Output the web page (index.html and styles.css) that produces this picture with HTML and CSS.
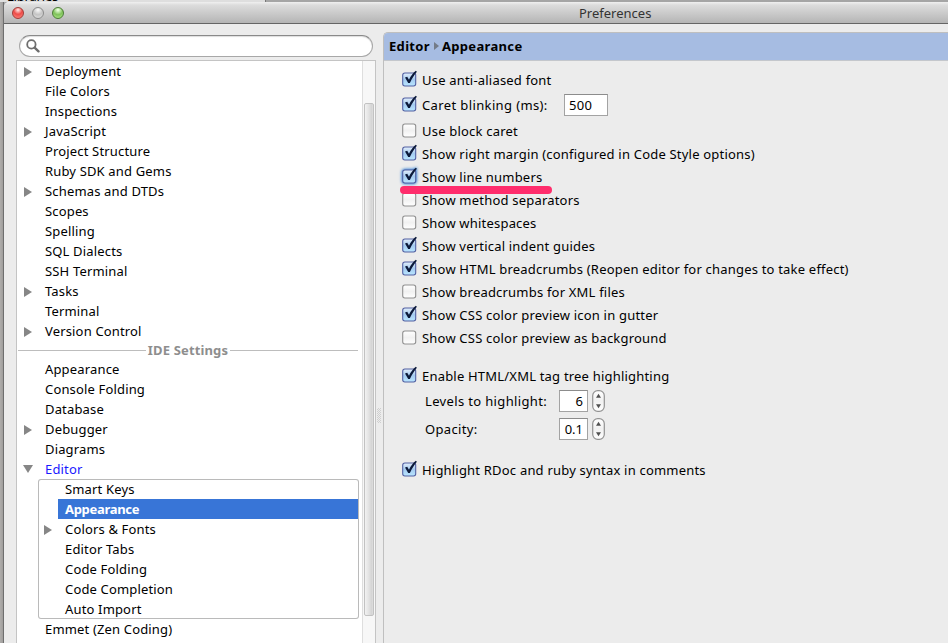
FILE: index.html
```html
<!DOCTYPE html>
<html lang="en">
<head>
<meta charset="utf-8">
<title>Preferences</title>
<link rel="stylesheet" href="styles.css">
</head>
<body>
<svg class="defs" width="0" height="0">
  <defs>
    <linearGradient id="blue" x1="0" y1="0" x2="0" y2="1"><stop offset="0" stop-color="#e4effb"/><stop offset=".5" stop-color="#a5cbf0"/><stop offset="1" stop-color="#b9e6ff"/></linearGradient>
    <linearGradient id="plain" x1="0" y1="0" x2="0" y2="1"><stop offset="0" stop-color="#fff"/><stop offset=".5" stop-color="#f1f1f1"/><stop offset="1" stop-color="#fff"/></linearGradient>
    <symbol id="on" viewBox="0 0 16 17">
      <rect x=".7" y="3" width="13" height="13" rx="2.2" fill="url(#blue)" stroke="#5260a2" stroke-width="1.1"/>
      <path d="M3 7.500 5.200 6.800l1.800 2.900C8.700 6.200 11 3 13.800.8l1.100.9C12.200 5 9.900 8.500 7.900 13L6.200 13Z" fill="#0c1a3a"/>
    </symbol>
    <symbol id="off" viewBox="0 0 16 17">
      <rect x=".7" y="3" width="13" height="13" rx="2.2" fill="url(#plain)" stroke="#909090" stroke-width="1.1"/>
    </symbol>
    <symbol id="step" viewBox="0 0 13 22">
      <rect x=".7" y=".7" width="11.600" height="20.600" rx="5" fill="url(#plain)" stroke="#929292" stroke-width="1.2"/>
      <path d="M4 7.800h5L6.500 3.800ZM4 14.200h5L6.500 18.200Z" fill="#505050"/>
    </symbol>
  </defs>
</svg>
<div class="desktop"><span class="behind">Libraries</span></div>
<div class="window">
  <header class="titlebar">
    <i class="light red"></i><i class="light gray"></i><i class="light green"></i>
    <span class="title">Preferences</span>
  </header>
  <div class="content">
    <aside class="sidebar">
      <div class="search"><svg width="14" height="14" viewBox="0 0 14 14"><circle cx="5.400" cy="5.400" r="4.200" fill="none" stroke="#6e6e6e" stroke-width="1.800"/><path d="m8.600 8.600 3.900 3.700" stroke="#6e6e6e" stroke-width="2.400" stroke-linecap="round"/></svg></div>
      <div class="tree">
        <div class="rows">
          <div class="row closed">Deployment</div>
          <div class="row">File Colors</div>
          <div class="row">Inspections</div>
          <div class="row closed">JavaScript</div>
          <div class="row">Project Structure</div>
          <div class="row">Ruby SDK and Gems</div>
          <div class="row closed">Schemas and DTDs</div>
          <div class="row">Scopes</div>
          <div class="row">Spelling</div>
          <div class="row">SQL Dialects</div>
          <div class="row">SSH Terminal</div>
          <div class="row closed">Tasks</div>
          <div class="row">Terminal</div>
          <div class="row closed">Version Control</div>
          <div class="divider">IDE Settings</div>
          <div class="row">Appearance</div>
          <div class="row">Console Folding</div>
          <div class="row">Database</div>
          <div class="row closed">Debugger</div>
          <div class="row">Diagrams</div>
          <div class="row open">Editor</div>
          <div class="group">
            <div class="row">Smart Keys</div>
            <div class="row selected">Appearance</div>
            <div class="row closed">Colors &amp; Fonts</div>
            <div class="row">Editor Tabs</div>
            <div class="row">Code Folding</div>
            <div class="row">Code Completion</div>
            <div class="row">Auto Import</div>
          </div>
          <div class="row">Emmet (Zen Coding)</div>
        </div>
        <div class="track"><div class="thumb"></div></div>
      </div>
    </aside>
    <div class="splitter"><i class="grip"></i></div>
    <main class="panel">
      <div class="crumbs">Editor<i class="arrow"></i>Appearance</div>
      <div class="options">
        <div class="opt"><svg class="box"><use href="#on"/></svg>Use anti-aliased font</div>
        <div class="opt tall"><svg class="box"><use href="#on"/></svg><span class="caret-label">Caret blinking (ms):</span><span class="field">500</span></div>
        <div class="opt"><svg class="box"><use href="#off"/></svg>Use block caret</div>
        <div class="opt"><svg class="box"><use href="#on"/></svg>Show right margin (configured in Code Style options)</div>
        <div class="opt marked"><svg class="box focus"><use href="#on"/></svg>Show line numbers</div>
        <div class="opt"><svg class="box"><use href="#off"/></svg>Show method separators</div>
        <div class="opt"><svg class="box"><use href="#off"/></svg>Show whitespaces</div>
        <div class="opt"><svg class="box"><use href="#on"/></svg>Show vertical indent guides</div>
        <div class="opt"><svg class="box"><use href="#on"/></svg>Show HTML breadcrumbs (Reopen editor for changes to take effect)</div>
        <div class="opt"><svg class="box"><use href="#off"/></svg>Show breadcrumbs for XML files</div>
        <div class="opt"><svg class="box"><use href="#on"/></svg>Show CSS color preview icon in gutter</div>
        <div class="opt"><svg class="box"><use href="#off"/></svg>Show CSS color preview as background</div>
        <div class="opt spaced"><svg class="box"><use href="#on"/></svg>Enable HTML/XML tag tree highlighting</div>
        <div class="spin"><span class="spin-label">Levels to highlight:</span><span class="field small">6</span><svg class="stepper"><use href="#step"/></svg></div>
        <div class="spin"><span class="spin-label">Opacity:</span><span class="field small">0.1</span><svg class="stepper"><use href="#step"/></svg></div>
        <div class="opt last"><svg class="box"><use href="#on"/></svg>Highlight RDoc and ruby syntax in comments</div>
      </div>
    </main>
  </div>
</div>
</body>
</html>
```
FILE: styles.css
```css
* { box-sizing: border-box; }
body {
  margin: 0;
  width: 948px;
  height: 643px;
  overflow: hidden;
  background: linear-gradient(90deg, #b0aeac, #a09e9c 3px, #6f6f6f 3px, #6f6f6f 4px, #aaa 4px);
  font: 13px/20px "Noto Sans", "Open Sans", sans-serif;
  color: #000;
}
.defs { position: absolute; }
.desktop {
  height: 2px;
  overflow: hidden;
  background: linear-gradient(90deg, #dedede 265px, #777 265px, #777 266px, #a5a5a5 266px);
}
.behind { display: block; margin: -12px 0 0 7px; line-height: 16px; letter-spacing: -.2px; }
.window {
  height: 641px;
  margin-left: 4px;
  background: #ececec;
  border-top-left-radius: 5px;
  overflow: hidden;
}
.titlebar {
  display: flex;
  align-items: center;
  gap: 8px;
  height: 22px;
  padding-left: 8px;
  background: linear-gradient(#f0f0f0, #dcdcdc 3px, #b5b5b5);
  border-bottom: 1px solid #656565;
}
.light {
  width: 12px;
  height: 12px;
  border-radius: 50%;
  border: 1px solid #8b8b8b;
}
.red { border-color: #a13a36; background: radial-gradient(circle at 50% 20%, #ffd9d6 5%, #ee4c48 45%, #f76e68 75%, #ff9b94); }
.gray { background: radial-gradient(circle at 50% 20%, #f5f5f5 5%, #c4c4c4 50%, #e4e4e4); }
.green { border-color: #4a7c35; background: radial-gradient(circle at 50% 20%, #eaffdc 5%, #7fc25a 50%, #b4ee8e); }
.title { margin-left: 507px; color: #333; letter-spacing: 0; }
.content { display: flex; height: 619px; }
.sidebar { width: 372px; padding: 11px 0 0 12px; }
.search {
  width: 354px;
  height: 22px;
  margin: 0 0 3px 3px;
  padding: 2px 0 0 6px;
  border: 1px solid #a8a8a8;
  border-top-color: #8a8a8a;
  border-radius: 11px;
  background: #fff;
  box-shadow: inset 0 1px 1px #ddd;
}
.search svg { display: block; margin-top: 1px; }
.tree {
  display: flex;
  height: 590px;
  border: 1px solid #c4c4c4;
  border-bottom: 0;
  background: #fff;
}
.rows { width: 345px; flex: none; }
.row {
  position: relative;
  height: 20px;
  padding-left: 28px;
  white-space: nowrap;
  letter-spacing: .16px;
}
.closed::before, .open::before {
  content: "";
  position: absolute;
  left: 7px;
  top: 6px;
  border: solid transparent;
  border-width: 5px 0 5px 8px;
  border-left-color: #868686;
}
.open { color: #1a1aff; }
.open::before {
  left: 6px;
  border-width: 8px 5px 0;
  border-color: #868686 transparent transparent;
}
.divider {
  display: flex;
  align-items: center;
  gap: 2px;
  height: 18px;
  padding: 0 4px 0 1px;
  font-weight: 700;
  letter-spacing: .15px;
  color: #8e8e8e;
}
.divider::before, .divider::after { content: ""; flex: 1; height: 1px; background: #bdbdbd; }
.group {
  height: 140px;
  margin: 0 3px 0 21px;
  border-radius: 3px;
  box-shadow: inset 0 0 0 1px #bababa;
}
.group .row { padding-left: 27px; }
.group .closed::before { left: 6px; }
.group .selected {
  margin: 0 1px 0 20px;
  padding-left: 7px;
  background: #3875d7;
  color: #fff;
  font-weight: 700;
  letter-spacing: -.3px;
}
.track {
  flex: 1;
  padding: 42px 1px 0;
  border-left: 1px solid #dedede;
  background: #f7f7f7;
}
.thumb {
  height: 513px;
  border: 1px solid #c2c2c2;
  border-radius: 2px;
  background: linear-gradient(90deg, #f2f2f2, #e5e5e5 40%, #d4d4d4 85%, #e0e0e0);
}
.splitter { width: 7px; padding: 384px 0 0 1px; }
.grip {
  display: block;
  width: 4px;
  height: 15px;
  background: conic-gradient(#bbb 25%, #ececec 0 50%, #bbb 0 75%, #ececec 0) 0 0 / 2px 2px;
  opacity: .6;
}
.panel {
  flex: 1;
  margin-top: 8px;
  border: solid #bfbfbf;
  border-width: 1px 0 0 1px;
  border-top-left-radius: 5px;
  overflow: hidden;
}
.crumbs {
  display: flex;
  align-items: center;
  height: 28px;
  padding: 0 0 2px 5px;
  background: #a6bce2;
  border-bottom: 1px solid #c4c7cc;
  font-weight: 700;
  letter-spacing: .33px;
}
.arrow { margin: 0 3px 0 4px; border: solid transparent; border-width: 4.500px 0 4.500px 5px; border-left-color: #737b88; }
.options { padding: 7px 0 0 17px; }
.opt { position: relative; display: flex; align-items: center; height: 23px; white-space: nowrap; letter-spacing: .2px; }
.box { width: 16px; height: 17px; margin: -3px 4px 0 1px; overflow: visible; flex: none; }
.tall { height: 28px; }
.caret-label { width: 142px; letter-spacing: .38px; }
.field {
  width: 44px;
  height: 22px;
  padding-left: 4px;
  border: 1px solid #a3a3a3;
  border-top-color: #8c8c8c;
  background: #fff;
  line-height: 21px;
  letter-spacing: .3px;
}
.focus { filter: drop-shadow(0 0 1.500px #4a8bd4) drop-shadow(0 0 1px #6ba4e2); }
.marked::after {
  content: "";
  position: absolute;
  z-index: 1;
  left: -1px;
  top: 21px;
  width: 152px;
  height: 8px;
  border-radius: 4px;
  background: #ff2d6c;
}
.spaced { margin-top: 15px; }
.spin { display: flex; align-items: center; height: 28px; padding-left: 24px; }
.spin-label { width: 134px; letter-spacing: .35px; }
.small { width: 29px; padding: 0 4px 0 0; text-align: right; letter-spacing: 0; }
.stepper { width: 13px; height: 22px; margin-left: 4px; }
.last { margin-top: 15px; }
```
